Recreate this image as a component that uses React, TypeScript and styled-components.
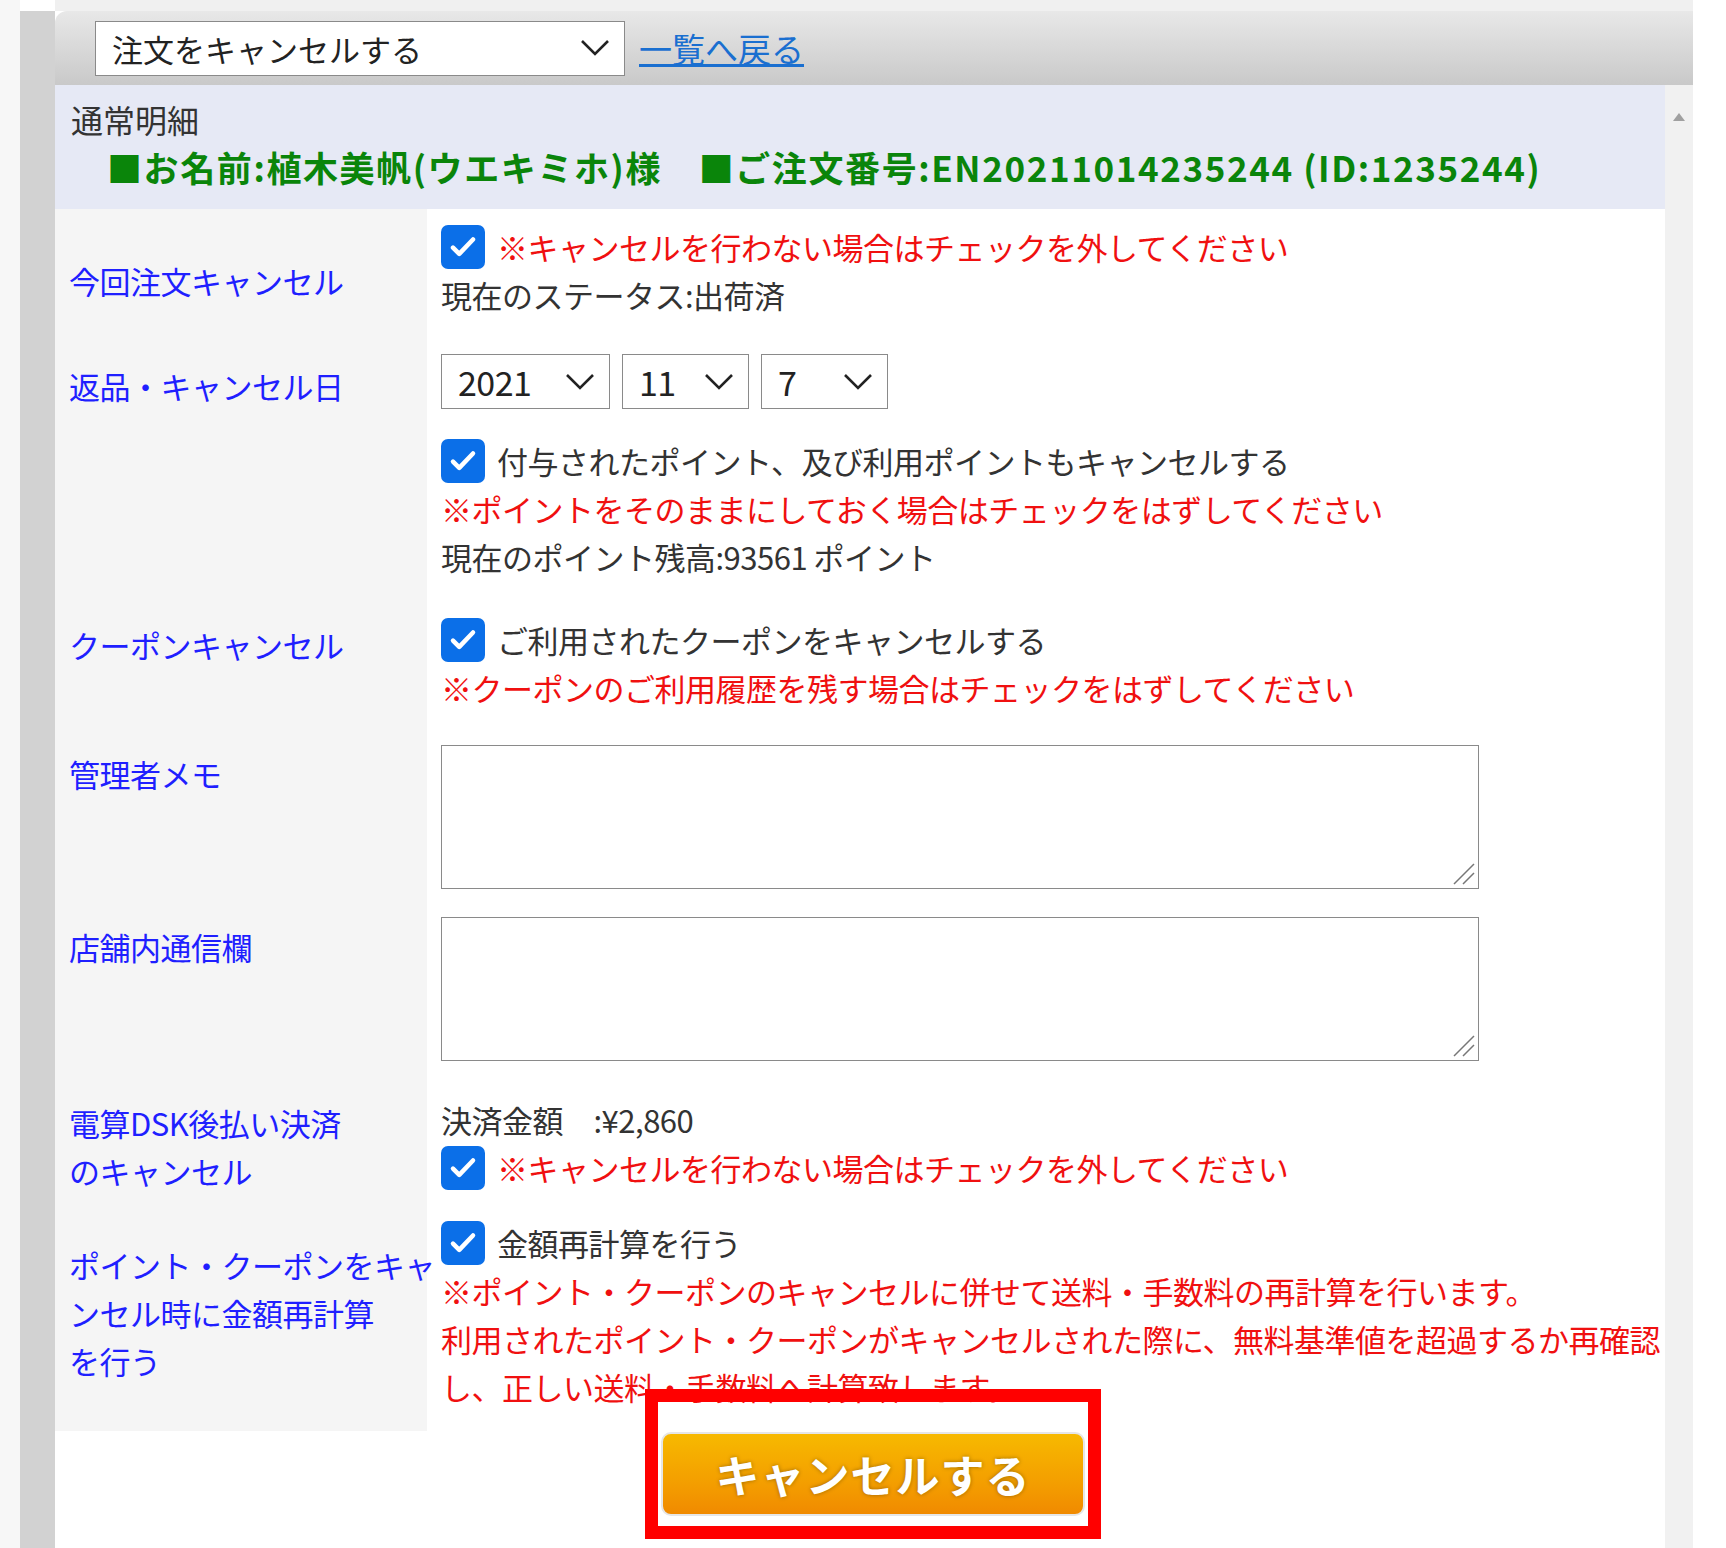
import React from "react";
import styled, { createGlobalStyle } from "styled-components";

const G = createGlobalStyle`
  body { margin: 0; background: #fff; font-family: "Noto Sans CJK JP", "Noto Sans", sans-serif; }
`;
const Page = styled.div`display:flex; width:1726px; height:1548px; overflow:hidden; background:#fff;`;
const LeftMargin = styled.div`width:20px; background:#f7f7f7;`;
const LeftBar = styled.div`width:35px; background:#d2d2d2; margin-top:11px;`;
const Main = styled.div`width:1638px; display:flex; flex-direction:column; border-top:11px solid #f0f0f0;`;
const Header = styled.div`
  height:74px; display:flex; align-items:center; gap:14px; padding-left:40px;
  background:linear-gradient(#e8e8e8,#c9c9c9); border-top-left-radius:12px; box-sizing:border-box;
`;
const Select = styled.div<{ w: number; big?: boolean }>`
  width:${p => p.w}px; height:${p => (p.big ? 53 : 55)}px; box-sizing:border-box; background:#fff;
  border:1.5px solid #8a8a8a; display:flex; align-items:center; justify-content:space-between;
  padding:0 14px 0 16px; font-size:${p => (p.big ? 31 : 34)}px; color:#222;
`;
const LinkA = styled.a`font-size:33px; color:#1a6fd0; text-decoration:underline;`;
const Body = styled.div`display:flex; flex:1;`;
const Content = styled.div`width:1610px; overflow:hidden;`;
const Gutter = styled.div`flex:1; background:#f1f1f1; position:relative;`;
const Arrow = styled.div`position:absolute; top:28px; left:8px; width:0;height:0;border-left:6px solid transparent;border-right:6px solid transparent;border-bottom:8px solid #a0a0a0;`;
const Info = styled.div`height:124px; background:#e6e9f5; padding:10px 0 0 16px; box-sizing:border-box; font-size:32px; color:#333; line-height:48px;`;
const Green = styled.div`color:#0a850a; font-weight:bold; padding-left:36px; font-size:35px; letter-spacing:1.6px; white-space:nowrap;`;
const Grid = styled.div`display:grid; grid-template-columns:372px 1fr;`;
const Label = styled.div<{ pt: number; h: number }>`
  background:#f5f5f5; color:#1f1fff; font-size:31px; line-height:48px; padding:${p => p.pt}px 0 0 14px;
  height:${p => p.h}px; box-sizing:border-box; white-space:nowrap; letter-spacing:-0.5px;
`;
const Value = styled.div<{ pt: number; h: number }>`
  padding:${p => p.pt}px 0 0 14px; height:${p => p.h}px; box-sizing:border-box; font-size:31px; line-height:48px; color:#333; white-space:nowrap; letter-spacing:-0.5px;
`;
const Line = styled.div<{ red?: boolean }>`display:flex; align-items:center; gap:12px; color:${p => (p.red ? "#f01010" : "#333")};`;
const Red = styled.span`color:#f01010;`;
const Box = styled.span`width:44px; height:44px; border-radius:7px; background:#0b6fe8; display:inline-flex; align-items:center; justify-content:center; flex:none;`;
const Dates = styled.div`display:flex; gap:12px;`;
const Area = styled.div`width:1038px; height:144px; border:1.5px solid #8a8a8a; box-sizing:border-box; position:relative; background:#fff;`;
const Grip = styled.svg`position:absolute; right:2px; bottom:2px;`;
const ButtonRow = styled.div`display:flex; padding-left:590px; margin-top:-42px;`;
const Frame = styled.div`border:13px solid #ff0000; padding:30px 3px 10px 3px; background:transparent;`;
const Btn = styled.div`
  width:424px; height:84px; border-radius:10px; box-sizing:border-box; border:2px solid #e6e6e6;
  background:linear-gradient(#f7b900,#f39a00 70%,#f08a00); color:#fff; font-weight:bold; font-size:44px;
  display:flex; align-items:center; justify-content:center; text-shadow:0 0 4px rgba(0,0,0,.35); letter-spacing:1px;
`;

const Check = () => (
  <Box>
    <svg width="30" height="30" viewBox="0 0 24 24"><path d="M4 12.5l5 5L20 6" stroke="#fff" strokeWidth="3.6" fill="none" strokeLinecap="round" strokeLinejoin="round" /></svg>
  </Box>
);
const Chev = () => (
  <svg width="30" height="18" viewBox="0 0 30 18"><path d="M2 2l13 13L28 2" stroke="#222" strokeWidth="2.6" fill="none" /></svg>
);
const TA = () => (
  <Area>
    <Grip width="26" height="26" viewBox="0 0 26 26"><path d="M24 4L4 24M24 13L13 24" stroke="#777" strokeWidth="1.5" /></Grip>
  </Area>
);

export default function App() {
  return (
    <Page>
      <G />
      <LeftMargin />
      <LeftBar />
      <Main>
        <Header>
          <Select w={530} big={false}><span style={{ fontSize: 31 }}>注文をキャンセルする</span><Chev /></Select>
          <LinkA href="#">一覧へ戻る</LinkA>
        </Header>
        <Body>
          <Content>
            <Info>
              <div>通常明細</div>
              <Green>■お名前:植木美帆(ウエキミホ)様　■ご注文番号:EN20211014235244 (ID:1235244)</Green>
            </Info>
            <Grid>
              <Label pt={48} h={132}>今回注文キャンセル</Label>
              <Value pt={14} h={132}>
                <Line red><Check />※キャンセルを行わない場合はチェックを外してください</Line>
                <Line>現在のステータス:出荷済</Line>
              </Value>
              <Label pt={21} h={83}>返品・キャンセル日</Label>
              <Value pt={13} h={83}>
                <Dates>
                  <Select w={169}>2021<Chev /></Select>
                  <Select w={127}>11<Chev /></Select>
                  <Select w={127}>7<Chev /></Select>
                </Dates>
              </Value>
              <Label pt={0} h={176} />
              <Value pt={13} h={176}>
                <Line><Check />付与されたポイント、及び利用ポイントもキャンセルする</Line>
                <Line red>※ポイントをそのままにしておく場合はチェックをはずしてください</Line>
                <Line>現在のポイント残高:93561 ポイント</Line>
              </Value>
              <Label pt={21} h={126}>クーポンキャンセル</Label>
              <Value pt={16} h={126}>
                <Line><Check />ご利用されたクーポンをキャンセルする</Line>
                <Line red>※クーポンのご利用履歴を残す場合はチェックをはずしてください</Line>
              </Value>
              <Label pt={24} h={176}>管理者メモ</Label>
              <Value pt={19} h={176}><TA /></Value>
              <Label pt={21} h={182}>店舗内通信欄</Label>
              <Value pt={15} h={182}><TA /></Value>
              <Label pt={15} h={121}>電算DSK後払い決済<br />のキャンセル</Label>
              <Value pt={12} h={121}>
                <Line>決済金額　:¥2,860</Line>
                <Line red><Check />※キャンセルを行わない場合はチェックを外してください</Line>
              </Value>
              <Label pt={36} h={226}>ポイント・クーポンをキャ<br />ンセル時に金額再計算<br />を行う</Label>
              <Value pt={14} h={226}>
                <Line><Check />金額再計算を行う</Line>
                <Line red>※ポイント・クーポンのキャンセルに併せて送料・手数料の再計算を行います。</Line>
                <Line red>利用されたポイント・クーポンがキャンセルされた際に、無料基準値を超過するか再確認</Line>
                <Line><Red>し、正しい送料・手数料へ計算致します。</Red></Line>
              </Value>
            </Grid>
            <ButtonRow>
              <Frame><Btn>キャンセルする</Btn></Frame>
            </ButtonRow>
          </Content>
          <Gutter><Arrow /></Gutter>
        </Body>
      </Main>
    </Page>
  );
}
